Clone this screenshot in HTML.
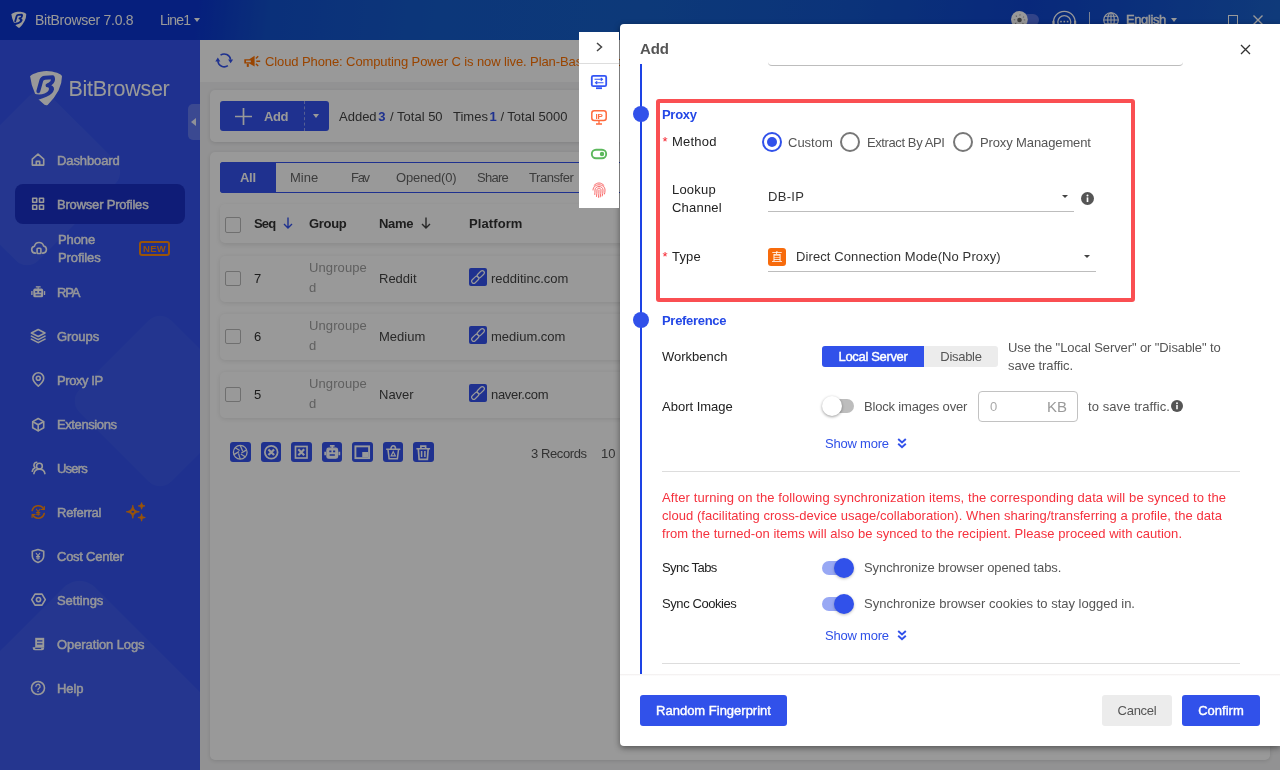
<!DOCTYPE html>
<html lang="en">
<head>
<meta charset="utf-8">
<title>BitBrowser</title>
<style>
*{box-sizing:border-box;margin:0;padding:0}
html,body{width:1280px;height:770px;overflow:hidden}
body{font-family:"Liberation Sans","Noto Sans CJK SC",sans-serif;font-size:13px;color:#333;background:#f4f4f5;position:relative}
.abs{position:absolute}
#titlebar,#sidebar,#main,#dialog,#strip{will-change:transform}
svg{display:block;overflow:visible}
/* title bar */
#titlebar{position:absolute;left:0;top:0;width:1280px;height:40px;background:linear-gradient(97deg,#0a34d0 0%,#0a35d0 15.500%,#1250cb 21%,#155ccb 34%,#1660ca 50%,#1356cb 66%,#0e44ce 80%,#1352cd 90%,#1a62cc 100%);color:#fff}
#titlebar .t{position:absolute;top:0;height:40px;line-height:40px;font-size:14px;white-space:nowrap}
/* sidebar */
#sidebar{position:absolute;left:0;top:40px;width:200px;height:730px;background:#3453ee;overflow:hidden}
.deco{position:absolute;background:rgba(255,255,255,.05);transform:rotate(45deg)}
.nav{position:absolute;left:57px;color:rgba(255,255,255,.95);font-weight:400;-webkit-text-stroke:.45px rgba(255,255,255,.95);font-size:13px;white-space:nowrap;line-height:18px;letter-spacing:-.1px;margin-top:1px}
.nico{position:absolute;left:31px;width:14px;height:14px}
.nico svg{width:14px;height:14px;fill:none;stroke:rgba(255,255,255,.92);stroke-width:1.6;stroke-linecap:round;stroke-linejoin:round}
/* main */
#main{position:absolute;left:200px;top:40px;width:1080px;height:730px;background:#f4f4f5}
.card{position:absolute;background:#fff;border-radius:5px;box-shadow:0 1px 4px rgba(0,0,0,.12)}
.txt{position:absolute;white-space:nowrap;line-height:18px;margin-top:1px}
#overlay{position:absolute;left:0;top:0;width:1280px;height:770px;background:rgba(0,0,0,.4)}
/* dialog */
#dialog{position:absolute;left:620px;top:24px;width:660px;height:722px;background:#fff;border-radius:4px 0 0 4px;box-shadow:0 2px 6px rgba(0,0,0,.45)}
#strip{position:absolute;left:579px;top:32px;width:40px;height:176px;background:#fff}
.pri{color:#3151ea}
.btn{position:absolute;border-radius:3px;text-align:center;white-space:nowrap}
</style>
</head>
<body>
<div id="titlebar">
<div class="abs" style="left:9.400px;top:9.300px"><svg viewBox="0 0 45 45" width="21" height="21"><defs><mask id="mk2"><rect width="45" height="45" fill="#000"/><path d="M5 11.800C5 9.500 14 6 21.500 5.900C29 6 37 9 37 11.200Q37 18.500 33.500 25.500Q29 34 22.600 40Q21 40.600 19.500 39.800L13.300 34.300L10 28.500Q6 20 5 10.800Z" fill="#fff"/><path d="M13.300 26.300L16.300 15.400Q17.100 12.900 20 12.700L27.600 12.200Q28.800 14.600 27 17.200Q25.400 19.400 22.500 20.300" fill="none" stroke="#000" stroke-width="3.900" stroke-linecap="round" stroke-linejoin="round"/><path d="M22 18.800Q29.600 20.400 29 24.600Q28 29 21.500 31.800Q17 33.600 12.500 35L9 28.800Q15 30.400 19.500 28.600Q23.800 26.800 24 23.800Q24 22 21 21.600Z" fill="#000"/></mask></defs><rect width="45" height="45" fill="#fff" mask="url(#mk2)"/></svg></div>
<div class="t" style="left:35px;letter-spacing:-.27px">BitBrowser 7.0.8</div>
<div class="t" style="left:160px;letter-spacing:-.8px">Line1</div>
<div class="abs" style="left:194px;top:18px;width:0;height:0;border-left:3.5px solid transparent;border-right:3.5px solid transparent;border-top:4px solid #fff"></div>
<div class="abs" style="left:1012px;top:14px;width:27px;height:12px;border-radius:6px;background:rgba(125,140,240,.62)"></div>
<svg class="abs" style="left:1010px;top:10px" width="19" height="19" viewBox="0 0 19 19"><circle cx="9.400" cy="9.400" r="8.400" fill="#fff"/><circle cx="9.500" cy="10" r="2.300" fill="#666"/><circle cx="9.500" cy="10" r="5" fill="none" stroke="#999" stroke-width="1.500" stroke-dasharray=".9 3.027" transform="rotate(-6 9.500 10)"/></svg>
<svg class="abs" style="left:1050px;top:8px" width="30" height="30" viewBox="0 0 30 30" fill="none" stroke="#fff" stroke-width="1.250"><circle cx="14.300" cy="14.100" r="6.500"/><path d="M3.670 16A10.800 10.800 0 1 1 24.930 16"/><path d="M3.500 13.500v5M25.100 13.500v5" stroke-width="2.200" stroke-linecap="round"/><rect x="10.200" y="12.800" width="1.600" height="1.600" fill="#fff" stroke="none"/><rect x="13.500" y="12.800" width="1.600" height="1.600" fill="#fff" stroke="none"/><rect x="16.800" y="12.800" width="1.600" height="1.600" fill="#fff" stroke="none"/></svg>
<div class="abs" style="left:1089px;top:12px;width:1px;height:16px;background:rgba(255,255,255,.8)"></div>
<svg class="abs" style="left:1103px;top:12px" width="16" height="16" viewBox="0 0 16 16" fill="none" stroke="#fff" stroke-width="1.1"><circle cx="8" cy="8" r="7.300"/><ellipse cx="8" cy="8" rx="3.300" ry="7.300"/><path d="M.7 8h14.600M1.700 4.300h12.600M1.700 11.700h12.600M8 .7v14.600"/></svg>
<div class="t" style="left:1126px;font-size:13px;letter-spacing:-.4px;-webkit-text-stroke:.4px #fff">English</div>
<div class="abs" style="left:1171px;top:18px;width:0;height:0;border-left:3.5px solid transparent;border-right:3.5px solid transparent;border-top:4px solid #fff"></div>
<div class="abs" style="left:1228px;top:15px;width:10px;height:12px;border:1.3px solid #fff"></div>
<svg class="abs" style="left:1253px;top:15px" width="10" height="10" viewBox="0 0 10 10" stroke="#fff" stroke-width="1.4"><path d="M.5 .5l9 9M9.500 .5l-9 9"/></svg>
</div>
<div id="sidebar">
<div class="deco" style="left:-28px;top:68px;width:123px;height:141px;border-radius:16px"></div>
<div class="deco" style="left:95px;top:296px;width:130px;height:130px;border-radius:16px;background:rgba(255,255,255,.04)"></div>
<div class="deco" style="left:-76.500px;top:595.500px;width:311px;height:311px;border-radius:22px"></div>
<div class="abs" style="left:25px;top:25px"><svg viewBox="0 0 45 45" width="45" height="45"><defs><mask id="mk1"><rect width="45" height="45" fill="#000"/><path d="M5 11.800C5 9.500 14 6 21.500 5.900C29 6 37 9 37 11.200Q37 18.500 33.500 25.500Q29 34 22.600 40Q21 40.600 19.500 39.800L13.300 34.300L10 28.500Q6 20 5 10.800Z" fill="#fff"/><path d="M13.300 26.300L16.300 15.400Q17.100 12.900 20 12.700L27.600 12.200Q28.800 14.600 27 17.200Q25.400 19.400 22.500 20.300" fill="none" stroke="#000" stroke-width="3.900" stroke-linecap="round" stroke-linejoin="round"/><path d="M22 18.800Q29.600 20.400 29 24.600Q28 29 21.500 31.800Q17 33.600 12.500 35L9 28.800Q15 30.400 19.500 28.600Q23.800 26.800 24 23.800Q24 22 21 21.600Z" fill="#000"/></mask></defs><rect width="45" height="45" fill="#fff" mask="url(#mk1)"/></svg></div>
<div class="abs" style="left:68.500px;top:34px;font-size:21.500px;line-height:30px;color:#fff;letter-spacing:-.3px;white-space:nowrap">BitBrowser</div>
<div class="abs" style="left:188px;top:64px;width:12px;height:36px;border-radius:5px 0 0 5px;background:rgba(255,255,255,.23)"></div>
<div class="abs" style="left:191px;top:78px;width:0;height:0;border-top:4px solid transparent;border-bottom:4px solid transparent;border-right:5px solid rgba(255,255,255,.9)"></div>
<div class="abs" style="left:15px;top:144px;width:170px;height:40px;border-radius:8px;background:#1a2fc6"></div>
<svg class="abs" style="left:30px;top:112px" width="16" height="16" viewBox="0 0 16 16" fill="none" stroke="#fff" stroke-width="1.600" stroke-linejoin="round" stroke-linecap="round"><path d="M2.300 13.100V7.100L8 2.200l5.700 4.900v6z"/><path d="M6.300 13.100V9.400h3.400v3.700"/></svg>
<svg class="abs" style="left:30px;top:156px" width="16" height="16" viewBox="0 0 16 16" fill="none" stroke="#fff" stroke-width="1.600" stroke-linejoin="round" stroke-linecap="round"><rect x="2.700" y="2.300" width="4" height="4"/><rect x="9.500" y="2.300" width="4" height="4"/><rect x="2.700" y="9.300" width="4" height="4"/><rect x="9.500" y="9.300" width="4" height="4"/></svg>
<svg class="abs" style="left:30px;top:200px" width="16" height="16" viewBox="0 0 16 16" fill="none" stroke="#fff" stroke-width="1.600" stroke-linejoin="round" stroke-linecap="round"><path d="M5.600 13.100H5.200a3.500 3.500 0 0 1-.7-6.930A4.700 4.700 0 0 1 13.600 6a3.600 3.600 0 0 1-.5 7.100h-.7"/><rect x="7.100" y="8.300" width="3.800" height="5.200" rx=".8"/></svg>
<svg class="abs" style="left:30px;top:244px" width="16" height="16" viewBox="0 0 16 16" fill="#fff"><rect x="3.300" y="4.600" width="9.800" height="8.700" rx="1.600"/><rect x="5.800" y="2.200" width="4.800" height="1.300"/><rect x="7.500" y="3.300" width="1.400" height="1.500"/><rect x="1.200" y="7" width="1.400" height="4" rx=".5"/><rect x="13.800" y="7" width="1.400" height="4" rx=".5"/><rect x="5.100" y="7.100" width="2.200" height="1.500" fill="#3453ee"/><rect x="9.100" y="7.100" width="2.200" height="1.500" fill="#3453ee"/><rect x="5.600" y="10.300" width="5.200" height="1.200" fill="#3453ee"/></svg>
<svg class="abs" style="left:30px;top:288px" width="16" height="16" viewBox="0 0 16 16" fill="none" stroke="#fff" stroke-width="1.600" stroke-linejoin="round" stroke-linecap="round"><path d="M8.200 1.500L15 5 8.200 8.500 1.400 5z"/><path d="M1.400 8.100l6.800 3.500L15 8.100"/><path d="M1.400 11.100l6.800 3.500 6.800-3.500"/></svg>
<svg class="abs" style="left:30px;top:332px" width="16" height="16" viewBox="0 0 16 16" fill="none" stroke="#fff" stroke-width="1.600" stroke-linejoin="round" stroke-linecap="round"><path d="M8.300 14.200s5.400-4.700 5.400-8A5.400 5.400 0 0 0 2.900 6.200c0 3.300 5.400 8 5.400 8z"/><circle cx="8.300" cy="6.300" r="2"/></svg>
<svg class="abs" style="left:30px;top:376px" width="16" height="16" viewBox="0 0 16 16" fill="none" stroke="#fff" stroke-width="1.600" stroke-linejoin="round" stroke-linecap="round"><path d="M8.200 2.500l5.500 3.100v6.200l-5.500 3.100-5.500-3.100V5.600z"/><path d="M2.900 5.800l5.300 3 5.300-3M8.200 8.800v5.900"/></svg>
<svg class="abs" style="left:30px;top:420px" width="16" height="16" viewBox="0 0 16 16" fill="none" stroke="#fff" stroke-width="1.600" stroke-linejoin="round" stroke-linecap="round"><circle cx="9.400" cy="6.200" r="2.900"/><path d="M3.900 13.700c.3-2.900 2.500-4.500 5.500-4.500s5.200 1.600 5.500 4.500"/><path d="M6.800 2.300a2.900 2.900 0 0 0-2 5M2.200 11.300c.3-1.800 1.300-3 2.900-3.600"/></svg>
<svg class="abs" style="left:30px;top:464px" width="16" height="16" viewBox="0 0 16 16" fill="none" stroke="#ff8a10" stroke-width="1.600" stroke-linejoin="round" stroke-linecap="round"><path d="M2.200 6.500A6.200 6.200 0 0 1 13.800 5.300M14.200 9.500A6.200 6.200 0 0 1 2.600 10.700"/><path d="M14.300 2.600v2.900h-2.900M2.100 13.400v-2.900H5" stroke-width="1.200"/><path d="M6.400 5.200l1.800 2.600L10 5.200M8.200 7.800v3.500M6.500 8.600h3.400M6.500 10.200h3.400" stroke-width="1.100"/></svg>
<svg class="abs" style="left:30px;top:508px" width="16" height="16" viewBox="0 0 16 16" fill="none" stroke="#fff" stroke-width="1.600" stroke-linejoin="round" stroke-linecap="round"><path d="M8 1.600l5.700 1.700v4.600c0 3-2.300 5.300-5.700 6.600C4.600 13.200 2.300 10.900 2.300 7.900V3.300z"/><path d="M6.200 5.300L8 7.900l1.800-2.600M8 7.900v3.500M6.400 8.500h3.200M6.400 10h3.200" stroke-width="1.100"/></svg>
<svg class="abs" style="left:30px;top:552px" width="16" height="16" viewBox="0 0 16 16" fill="none" stroke="#fff" stroke-width="1.600" stroke-linejoin="round" stroke-linecap="round"><path d="M5 2.100h7l3.300 5.500L12 13.100H5L1.700 7.600z"/><circle cx="8.500" cy="7.600" r="2.100"/></svg>
<svg class="abs" style="left:30px;top:596px" width="16" height="16" viewBox="0 0 16 16" fill="#fff"><path d="M5.200 1.800h9v9.400h-9z"/><path d="M2.700 11.200h11.500v.8a2.200 2.200 0 0 1-2.200 2.200H4.900a2.200 2.200 0 0 1-2.200-2.200z"/><rect x="7" y="4.300" width="5.400" height="1.200" fill="#3453ee"/><rect x="7" y="7.300" width="5.400" height="1.200" fill="#3453ee"/><rect x="5.200" y="11.900" width="6" height="1" fill="#3453ee"/></svg>
<svg class="abs" style="left:30px;top:640px" width="16" height="16" viewBox="0 0 16 16" fill="none" stroke="#fff" stroke-width="1.600" stroke-linejoin="round" stroke-linecap="round"><circle cx="8" cy="8" r="6.500"/><path d="M5.900 6.300a2.100 2.100 0 1 1 3.100 1.900c-.7.400-1 .8-1 1.500" stroke-width="1.300"/><circle cx="8" cy="11.500" r=".8" fill="#fff" stroke="none"/></svg>
<div class="nav" style="top:111px">Dashboard</div>
<div class="nav" style="top:155px;letter-spacing:-.2px">Browser Profiles</div>
<div class="nav" style="left:58px;top:190px">Phone<br>Profiles</div>
<div class="nav" style="top:243px;letter-spacing:-1.2px">RPA</div>
<div class="nav" style="top:287px">Groups</div>
<div class="nav" style="top:331px;letter-spacing:-0.42px">Proxy IP</div>
<div class="nav" style="top:375px;letter-spacing:-0.4px">Extensions</div>
<div class="nav" style="top:419px;letter-spacing:-0.8px">Users</div>
<div class="nav" style="top:463px;letter-spacing:-0.25px">Referral</div>
<div class="nav" style="top:507px;letter-spacing:-0.25px">Cost Center</div>
<div class="nav" style="top:551px">Settings</div>
<div class="nav" style="top:595px">Operation Logs</div>
<div class="nav" style="top:639px">Help</div>
<div class="abs" style="left:139px;top:200.500px;width:31px;height:15.500px;border:2px solid #ff8a10;border-radius:3px;color:#ff8a10;font-size:9.500px;font-weight:700;line-height:11.500px;text-align:center;letter-spacing:.2px">NEW</div>
<svg class="abs" style="left:126px;top:462px" width="20" height="20" viewBox="0 0 20 20" fill="#ff8a10" stroke="#ff8a10" stroke-width=".9" stroke-linejoin="round"><path d="M6.800 3.300C7.500 7.600 8.800 8.900 13.300 9.800 8.800 10.700 7.500 12 6.800 16.300 6.100 12 4.800 10.700 .3 9.800 4.800 8.900 6.100 7.600 6.800 3.300z"/><path d="M15.600 .6c.4 2.300 1 2.900 3.300 3.300-2.300.4-2.900 1-3.300 3.300-.4-2.300-1-2.900-3.300-3.300 2.300-.4 2.900-1 3.300-3.300z"/><path d="M15.600 11.800c.4 2.600 1.100 3.300 3.700 3.700-2.600.4-3.300 1.100-3.700 3.700-.4-2.600-1.100-3.300-3.700-3.700 2.600-.4 3.300-1.100 3.700-3.700z"/><ellipse cx="6.800" cy="9.800" rx="1.400" ry="1" fill="#3453ee" stroke="none"/></svg>
</div>
<div id="main">
<div class="abs" style="left:0;top:0;width:1080px;height:42px;background:#fff"></div>
<svg class="abs" style="left:10px;top:6px" width="30" height="30" viewBox="0 0 30 30" fill="none" stroke="#3453ee" stroke-width="1.550"><path d="M10.530 9.160A6.400 6.400 0 0 1 20.580 13.600"/><path d="M17.870 19.640A6.400 6.400 0 0 1 7.820 15.200"/><path d="M18.100 13.400h5l-2.500 3.900z" fill="#3453ee" stroke="none"/><path d="M5.300 15.400h5l-2.500-3.900z" fill="#3453ee" stroke="none"/></svg>
<svg class="abs" style="left:44px;top:15px" width="17" height="13" viewBox="0 0 17 13" fill="#ff7200" stroke="none"><path d="M.3 4.300h5L10.600 .8v10.800L5.300 8.600H.3zM2 5.600v1.700h4.800V5.600z" fill-rule="evenodd"/><path d="M2.800 8.600h2v3.300h-2z"/><path d="M11.400 3.100l2.300-2.300 1 1-2.300 2.300zM12.300 5.500h3.900v1.500h-3.900zM12.400 8.300l2.300 2.300-1 1-2.300-2.300z"/></svg>
<div class="txt" style="left:65px;top:12px;color:#ff7200;letter-spacing:-.1px">Cloud Phone: Computing Power C is now live. Plan-Based Pricing, Flexible Billing, More Cost-Effective</div>
<div class="card" style="left:10px;top:50px;width:1060px;height:52px"></div>
<div class="abs" style="left:20px;top:61px;width:109px;height:30px;border-radius:3px;background:#3453ee"></div>
<div class="abs" style="left:104px;top:61px;width:0;height:30px;border-left:1px dashed rgba(255,255,255,.45)"></div>
<svg class="abs" style="left:35px;top:68px" width="17" height="17" viewBox="0 0 17 17" stroke="#fff" stroke-width="1.700"><path d="M8.500 0v17M0 8.500h17"/></svg>
<div class="txt" style="left:64px;top:67px;color:#fff;font-weight:700;letter-spacing:-.4px">Add</div>
<div class="abs" style="left:113px;top:74px;width:0;height:0;border-left:3.500px solid transparent;border-right:3.500px solid transparent;border-top:4px solid #fff"></div>
<div class="txt" style="left:139px;top:67px;color:#444">Added <b style="color:#3453ee;margin-left:-2px">3</b> <span style="margin-left:1px">/</span> Total 50</div>
<div class="txt" style="left:253px;top:67px;color:#444">Times <b style="color:#3453ee;margin-left:-2px">1</b> / Total 5000</div>
<div class="card" style="left:10px;top:112px;width:1060px;height:608px"></div>
<div class="abs" style="left:20px;top:122px;width:1040px;height:31px;border:1px solid #3453ee;border-radius:3px"></div>
<div class="abs" style="left:20px;top:122px;width:56px;height:31px;border-radius:3px 0 0 3px;background:#3453ee"></div>
<div class="txt" style="left:40px;top:128px;color:#fff;font-weight:700;letter-spacing:-.3px">All</div>
<div class="txt" style="left:90px;top:128px;color:#666">Mine</div>
<div class="txt" style="left:151px;top:128px;color:#666;letter-spacing:-1.300px">Fav</div>
<div class="txt" style="left:196px;top:128px;color:#666;letter-spacing:-.2px">Opened(0)</div>
<div class="txt" style="left:277px;top:128px;color:#666;letter-spacing:-.75px">Share</div>
<div class="txt" style="left:329px;top:128px;color:#666;letter-spacing:-.45px">Transfer</div>
<div class="abs" style="left:20px;top:164px;width:1040px;height:39px;border-radius:5px;background:#fff;box-shadow:0 2px 5px rgba(0,0,0,.10)"></div>
<div class="abs" style="left:25px;top:177px;width:16px;height:16px;border:1px solid #b9b9b9;border-radius:2px;background:#fff"></div>
<div class="txt" style="left:54px;top:174px;color:#333;font-weight:700;letter-spacing:-.8px">Seq</div>
<div class="txt" style="left:109px;top:174px;color:#333;font-weight:700;letter-spacing:-.3px">Group</div>
<div class="txt" style="left:179px;top:174px;color:#333;font-weight:700;letter-spacing:-.3px">Name</div>
<div class="txt" style="left:269px;top:174px;color:#333;font-weight:700;letter-spacing:.1px">Platform</div>
<svg class="abs" style="left:83px;top:177px" width="10" height="12" viewBox="0 0 10 12" fill="none" stroke="#3453ee" stroke-width="1.400"><path d="M5 .5v10.500M1 7l4 4 4-4"/></svg>
<svg class="abs" style="left:221px;top:177px" width="10" height="12" viewBox="0 0 10 12" fill="none" stroke="#444" stroke-width="1.400"><path d="M5 .5v10.500M1 7l4 4 4-4"/></svg>
<div class="abs" style="left:20px;top:215.5px;width:1040px;height:46.500px;border-radius:5px;background:#fff;box-shadow:0 1px 5px rgba(0,0,0,.10)"></div>
<div class="abs" style="left:25px;top:231px;width:16px;height:15px;border:1px solid #b9b9b9;border-radius:2px;background:#fff"></div>
<div class="txt" style="left:54px;top:229px;color:#333">7</div>
<div class="txt" style="left:109px;top:217px;color:#a0a0a0;line-height:20px;letter-spacing:.1px">Ungroupe<br>d</div>
<div class="txt" style="left:179px;top:229px;color:#444">Reddit</div>
<div class="abs" style="left:269px;top:228px;width:18px;height:18px;border-radius:2px;background:#3453ee"></div>
<svg class="abs" style="left:269px;top:228px" width="18" height="18" viewBox="0 0 18 18" fill="none" stroke="#fff" stroke-width="1.150"><g transform="rotate(-45 9 9)"><rect x=".9" y="6.900" width="8.400" height="4.200" rx="2.100"/><rect x="8.700" y="6.900" width="8.400" height="4.200" rx="2.100"/></g></svg>
<div class="txt" style="left:291px;top:229px;color:#444">redditinc.com</div>
<div class="abs" style="left:20px;top:273.5px;width:1040px;height:46.500px;border-radius:5px;background:#fff;box-shadow:0 1px 5px rgba(0,0,0,.10)"></div>
<div class="abs" style="left:25px;top:289px;width:16px;height:15px;border:1px solid #b9b9b9;border-radius:2px;background:#fff"></div>
<div class="txt" style="left:54px;top:287px;color:#333">6</div>
<div class="txt" style="left:109px;top:275px;color:#a0a0a0;line-height:20px;letter-spacing:.1px">Ungroupe<br>d</div>
<div class="txt" style="left:179px;top:287px;color:#444">Medium</div>
<div class="abs" style="left:269px;top:286px;width:18px;height:18px;border-radius:2px;background:#3453ee"></div>
<svg class="abs" style="left:269px;top:286px" width="18" height="18" viewBox="0 0 18 18" fill="none" stroke="#fff" stroke-width="1.150"><g transform="rotate(-45 9 9)"><rect x=".9" y="6.900" width="8.400" height="4.200" rx="2.100"/><rect x="8.700" y="6.900" width="8.400" height="4.200" rx="2.100"/></g></svg>
<div class="txt" style="left:291px;top:287px;color:#444">medium.com</div>
<div class="abs" style="left:20px;top:331.5px;width:1040px;height:46.500px;border-radius:5px;background:#fff;box-shadow:0 1px 5px rgba(0,0,0,.10)"></div>
<div class="abs" style="left:25px;top:347px;width:16px;height:15px;border:1px solid #b9b9b9;border-radius:2px;background:#fff"></div>
<div class="txt" style="left:54px;top:345px;color:#333">5</div>
<div class="txt" style="left:109px;top:333px;color:#a0a0a0;line-height:20px;letter-spacing:.1px">Ungroupe<br>d</div>
<div class="txt" style="left:179px;top:345px;color:#444">Naver</div>
<div class="abs" style="left:269px;top:344px;width:18px;height:18px;border-radius:2px;background:#3453ee"></div>
<svg class="abs" style="left:269px;top:344px" width="18" height="18" viewBox="0 0 18 18" fill="none" stroke="#fff" stroke-width="1.150"><g transform="rotate(-45 9 9)"><rect x=".9" y="6.900" width="8.400" height="4.200" rx="2.100"/><rect x="8.700" y="6.900" width="8.400" height="4.200" rx="2.100"/></g></svg>
<div class="txt" style="left:291px;top:345px;color:#444;letter-spacing:-.3px">naver.com</div>
<div class="abs" style="left:30px;top:402px;width:20.500px;height:20px;border-radius:3px;background:#3453ee"></div>
<svg class="abs" style="left:32.0px;top:403.500px" width="16.500" height="16.500" viewBox="0 0 14 14" fill="none" stroke="#fff" stroke-width="1.100"><circle cx="7" cy="7" r="5.800"/><path d="M7 1.200L9 6M12.500 5L8 7.500M11.500 11L7.500 8.500M7 12.800L5.500 8M1.500 9L6 6.500M2.500 3L6.500 5.500"/></svg>
<div class="abs" style="left:60.5px;top:402px;width:20.500px;height:20px;border-radius:3px;background:#3453ee"></div>
<svg class="abs" style="left:62.5px;top:403.500px" width="16.500" height="16.500" viewBox="0 0 14 14" fill="none" stroke="#fff" stroke-width="1.100"><circle cx="7" cy="7" r="5.400" stroke-width="1.500"/><path d="M4.600 4.600l4.800 4.800M9.400 4.600L4.600 9.400" stroke-width="1.900"/></svg>
<div class="abs" style="left:91px;top:402px;width:20.500px;height:20px;border-radius:3px;background:#3453ee"></div>
<svg class="abs" style="left:93.0px;top:403.500px" width="16.500" height="16.500" viewBox="0 0 14 14" fill="none" stroke="#fff" stroke-width="1.100"><rect x="2.100" y="2.100" width="9.800" height="9.800" stroke-width="1.400"/><path d="M4.500 4.500l5 5M9.500 4.500l-5 5" stroke-width="1.900"/></svg>
<div class="abs" style="left:121.5px;top:402px;width:20.500px;height:20px;border-radius:3px;background:#3453ee"></div>
<svg class="abs" style="left:123.5px;top:403.500px" width="16.500" height="16.500" viewBox="0 0 14 14" fill="none" stroke="#fff" stroke-width="1.100"><rect x="2.500" y="3.500" width="9" height="8.500" rx="1.500" fill="#fff"/><path d="M7 3.500V1.500M5 1.500h4M1 6.500v3M13 6.500v3" stroke-width="1.500"/><path d="M4.500 6.300h1.800M7.700 6.300h1.800M4.800 9.300h4.400" stroke="#3453ee" stroke-width="1.400"/></svg>
<div class="abs" style="left:152px;top:402px;width:20.500px;height:20px;border-radius:3px;background:#3453ee"></div>
<svg class="abs" style="left:154.0px;top:403.500px" width="16.500" height="16.500" viewBox="0 0 14 14" fill="none" stroke="#fff" stroke-width="1.100"><rect x="1.200" y="2" width="11.600" height="10" stroke-width="1.600"/><rect x="7" y="6.800" width="5" height="4.400" fill="#fff" stroke="none"/></svg>
<div class="abs" style="left:182.5px;top:402px;width:20.500px;height:20px;border-radius:3px;background:#3453ee"></div>
<svg class="abs" style="left:184.5px;top:403.500px" width="16.500" height="16.500" viewBox="0 0 14 14" fill="none" stroke="#fff" stroke-width="1.100"><path d="M2.500 4.500h9l-1 8h-7zM1 4.500h12M5 4.500C5 2.500 6 1.500 7 1.500s2 1 2 3" stroke-width="1.300"/><path d="M7 6.500l1.800 3.500H5.200z" stroke-width="1"/></svg>
<div class="abs" style="left:213px;top:402px;width:20.500px;height:20px;border-radius:3px;background:#3453ee"></div>
<svg class="abs" style="left:215.0px;top:403.500px" width="16.500" height="16.500" viewBox="0 0 14 14" fill="none" stroke="#fff" stroke-width="1.100"><path d="M2.800 4h8.400l-.7 9h-7zM1.200 4h11.600M5 4V1.800h4V4" stroke-width="1.400"/><path d="M5.600 6v5M8.400 6v5" stroke-width="1.300"/></svg>
<div class="txt" style="left:331px;top:404px;color:#555;letter-spacing:-.4px">3 Records</div>
<div class="txt" style="left:401px;top:404px;color:#555">10 Records/Page</div>
</div>
<div id="overlay"></div>
<div id="dialog">
<div class="txt" style="left:20px;top:15px;font-size:15px;font-weight:700;color:#555;letter-spacing:-.1px">Add</div>
<svg class="abs" style="left:620px;top:20px" width="11" height="11" viewBox="0 0 11 11" stroke="#333" stroke-width="1.300"><path d="M1 1l9 9M10 1l-9 9"/></svg>
<div class="abs" style="left:148px;top:38px;width:415px;height:4px;border-bottom:1px solid #bdbdbd;border-radius:0 0 4px 4px"></div>
<div class="abs" style="left:20px;top:40px;width:2px;height:610px;background:#1d43e5"></div>
<div class="abs" style="left:13px;top:82px;width:16px;height:16px;border-radius:50%;background:#3151ea"></div>
<div class="abs" style="left:13px;top:288px;width:16px;height:16px;border-radius:50%;background:#3151ea"></div>
<div class="abs" style="left:36px;top:75px;width:479px;height:203px;border:4px solid #fa4f52;border-radius:3px"></div>
<div class="txt" style="left:42px;top:81px;font-weight:700;color:#2347e6;letter-spacing:-.3px">Proxy</div>
<div class="txt" style="left:42.500px;top:108px;color:#f5222d;font-size:13px">*</div>
<div class="txt" style="left:52px;top:108px;color:#222;letter-spacing:.2px">Method</div>
<div class="abs" style="left:142px;top:108px;width:20px;height:20px;border-radius:50%;border:2px solid #3151ea"></div>
<div class="abs" style="left:147px;top:113px;width:10px;height:10px;border-radius:50%;background:#3151ea"></div>
<div class="txt" style="left:168px;top:109px;color:#555">Custom</div>
<div class="abs" style="left:220px;top:108px;width:20px;height:20px;border-radius:50%;border:2px solid #777"></div>
<div class="txt" style="left:247px;top:109px;color:#555;letter-spacing:-.4px">Extract By API</div>
<div class="abs" style="left:333px;top:108px;width:20px;height:20px;border-radius:50%;border:2px solid #777"></div>
<div class="txt" style="left:360px;top:109px;color:#555;letter-spacing:-.12px">Proxy Management</div>
<div class="txt" style="left:52px;top:156px;color:#222;letter-spacing:.2px">Lookup<br>Channel</div>
<div class="txt" style="left:148px;top:163px;color:#333;letter-spacing:.3px">DB-IP</div>
<div class="abs" style="left:148px;top:187px;width:306px;height:1px;background:#bdbdbd"></div>
<div class="abs" style="left:442px;top:171px;width:0;height:0;border-left:3.500px solid transparent;border-right:3.500px solid transparent;border-top:3.500px solid #444"></div>
<svg class="abs" style="left:461px;top:167.5px" width="13" height="13" viewBox="0 0 14 14"><circle cx="7" cy="7" r="7" fill="#555"/><rect x="6.100" y="5.800" width="1.800" height="5" fill="#fff"/><circle cx="7" cy="3.800" r="1.100" fill="#fff"/></svg>
<div class="txt" style="left:42.500px;top:223px;color:#f5222d;font-size:13px">*</div>
<div class="txt" style="left:52px;top:223px;color:#222;letter-spacing:.2px">Type</div>
<div class="abs" style="left:148px;top:224px;width:18px;height:18px;border-radius:3px;background:#f76b0c;color:#fff;font-size:11px;line-height:17px;text-align:center;font-family:'Noto Sans CJK SC',sans-serif">直</div>
<div class="txt" style="left:176px;top:223px;color:#333;letter-spacing:.1px">Direct Connection Mode(No Proxy)</div>
<div class="abs" style="left:148px;top:247px;width:328px;height:1px;background:#bdbdbd"></div>
<div class="abs" style="left:464px;top:231px;width:0;height:0;border-left:3.500px solid transparent;border-right:3.500px solid transparent;border-top:3.500px solid #444"></div>
<div class="txt" style="left:42px;top:287px;font-weight:700;color:#2347e6;letter-spacing:-.3px">Preference</div>
<div class="txt" style="left:42px;top:323px;color:#222">Workbench</div>
<div class="abs" style="left:202px;top:322px;width:176px;height:21px;border-radius:3px;background:#ececec"></div>
<div class="abs" style="left:202px;top:322px;width:102px;height:21px;border-radius:3px 0 0 3px;background:#3151ea"></div>
<div class="txt" style="left:202px;top:323px;width:102px;text-align:center;color:#fff;-webkit-text-stroke:.4px #fff;letter-spacing:-.35px">Local Server</div>
<div class="txt" style="left:304px;top:323px;width:74px;text-align:center;color:#555;letter-spacing:-.3px">Disable</div>
<div class="txt" style="left:388px;top:314px;color:#555;letter-spacing:-.1px">Use the "Local Server" or "Disable" to<br>save traffic.</div>
<div class="txt" style="left:42px;top:373px;color:#222">Abort Image</div>
<div class="abs" style="left:203px;top:375px;width:31px;height:14px;border-radius:7px;background:#bdbdbd"></div>
<div class="abs" style="left:202px;top:372px;width:20px;height:20px;border-radius:50%;background:#fff;box-shadow:0 1px 3px rgba(0,0,0,.4)"></div>
<div class="txt" style="left:244px;top:373px;color:#555;letter-spacing:-.18px">Block images over</div>
<div class="abs" style="left:358px;top:366.500px;width:100px;height:31px;border:1px solid #c2c2c2;border-radius:4px"></div>
<div class="txt" style="left:370px;top:373px;color:#aaa">0</div>
<div class="txt" style="left:427px;top:373px;color:#9a9a9a;font-size:15px">KB</div>
<div class="txt" style="left:468px;top:373px;color:#555;letter-spacing:.08px">to save traffic.</div>
<svg class="abs" style="left:551px;top:376px" width="12" height="12" viewBox="0 0 14 14"><circle cx="7" cy="7" r="7" fill="#555"/><rect x="6.100" y="5.800" width="1.800" height="5" fill="#fff"/><circle cx="7" cy="3.800" r="1.100" fill="#fff"/></svg>
<div class="txt" style="left:205px;top:410px;color:#2f50e8;letter-spacing:-.22px">Show more</div>
<svg class="abs" style="left:277px;top:414px" width="10" height="11" viewBox="0 0 10 11" fill="none" stroke="#3151ea" stroke-width="1.900"><path d="M1.200 1L5 4.500 8.800 1M1.200 5.800L5 9.300l3.800-3.500"/></svg>
<div class="abs" style="left:42px;top:447px;width:578px;height:1px;background:#ddd"></div>
<div class="txt" style="left:42px;top:464px;color:#f5313d"><span style="letter-spacing:.1px">After turning on the following synchronization items, the corresponding data will be synced to the</span><br><span style="letter-spacing:.05px">cloud (facilitating cross-device usage/collaboration). When sharing/transferring a profile, the data</span><br><span style="letter-spacing:.045px">from the turned-on items will also be synced to the recipient. Please proceed with caution.</span></div>
<div class="txt" style="left:42px;top:534px;color:#222;letter-spacing:-.55px">Sync Tabs</div>
<div class="abs" style="left:202px;top:537px;width:31px;height:14px;border-radius:7px;background:#98a8f4"></div>
<div class="abs" style="left:214px;top:534px;width:20px;height:20px;border-radius:50%;background:#3151ea;box-shadow:0 1px 3px rgba(0,0,0,.25)"></div>
<div class="txt" style="left:244px;top:534px;color:#555;letter-spacing:-.09px">Synchronize browser opened tabs.</div>
<div class="txt" style="left:42px;top:570px;color:#222;letter-spacing:-.42px">Sync Cookies</div>
<div class="abs" style="left:202px;top:573px;width:31px;height:14px;border-radius:7px;background:#98a8f4"></div>
<div class="abs" style="left:214px;top:570px;width:20px;height:20px;border-radius:50%;background:#3151ea;box-shadow:0 1px 3px rgba(0,0,0,.25)"></div>
<div class="txt" style="left:244px;top:570px;color:#555">Synchronize browser cookies to stay logged in.</div>
<div class="txt" style="left:205px;top:602px;color:#2f50e8;letter-spacing:-.22px">Show more</div>
<svg class="abs" style="left:277px;top:606px" width="10" height="11" viewBox="0 0 10 11" fill="none" stroke="#3151ea" stroke-width="1.900"><path d="M1.200 1L5 4.500 8.800 1M1.200 5.800L5 9.300l3.800-3.500"/></svg>
<div class="abs" style="left:42px;top:639px;width:578px;height:1px;background:#ddd"></div>
<div class="abs" style="left:0;top:650px;width:660px;height:2px;background:linear-gradient(#f1eeee,#fff)"></div>
<div class="btn" style="left:20px;top:671px;width:147px;height:31px;line-height:31px;background:#3151ea;color:#fff;-webkit-text-stroke:.4px #fff;letter-spacing:0">Random Fingerprint</div>
<div class="btn" style="left:482px;top:671px;width:70px;height:31px;line-height:31px;background:#ececec;color:#555;letter-spacing:-.25px">Cancel</div>
<div class="btn" style="left:562px;top:671px;width:78px;height:31px;line-height:31px;background:#3151ea;color:#fff;-webkit-text-stroke:.4px #fff;letter-spacing:0">Confirm</div>
</div>
<div id="strip">
<svg class="abs" style="left:17px;top:10px" width="7" height="10" viewBox="0 0 7 10" fill="none" stroke="#444" stroke-width="1.500"><path d="M1 1l4.500 4L1 9"/></svg>
<div class="abs" style="left:0;top:31px;width:40px;height:1px;background:#ddd"></div>
<svg class="abs" style="left:12px;top:43px" width="16" height="14" viewBox="0 0 16 14" fill="none" stroke="#3355f5" stroke-width="1.800"><rect x=".8" y=".8" width="14.400" height="10.400" rx="1.500"/><path d="M5 13.200h6" stroke-width="1.800"/><path d="M3.500 4.300h8M9.800 2.800l1.700 1.500-1.700 1.500M12.500 7.700h-8M6.200 6.200L4.500 7.700l1.700 1.500" stroke-width="1.100"/></svg>
<svg class="abs" style="left:12px;top:78px" width="16" height="15" viewBox="0 0 16 15" fill="none" stroke="#ff6a3d" stroke-width="1.500"><rect x=".8" y=".8" width="14.400" height="9.800" rx="2.500"/><path d="M8 10.600v3M5 14h6" stroke-width="1.300"/></svg>
<div class="abs" style="left:12px;top:80.500px;width:16px;text-align:center;font-size:8px;line-height:8px;font-weight:700;color:#ff6a3d;letter-spacing:-.2px">IP</div>
<svg class="abs" style="left:12px;top:117px" width="16" height="10" viewBox="0 0 16 10" fill="none" stroke="#5cb85c" stroke-width="1.900"><rect x=".8" y=".8" width="14.400" height="8.400" rx="4.200"/><circle cx="11" cy="5" r="2.200" fill="#5cb85c" stroke="none"/></svg>
<svg class="abs" style="left:13px;top:150px" width="14" height="16" viewBox="0 0 14 16" fill="none" stroke="#f75a5a" stroke-width=".9" stroke-linecap="round"><path d="M2 3.500C3.500 1.800 5.200 1 7 1s3.500.8 5 2.500"/><path d="M1 8c0-3 2.700-5.200 6-5.200S13 5 13 8c0 1.500-.2 3-.5 4"/><path d="M2.800 12.500C2.900 11 3 9.500 3 8c0-2 1.800-3.500 4-3.500S11 6 11 8c0 2.200-.3 4.500-.8 6"/><path d="M4.500 14.500C4.800 12.500 5 10 5 8c0-1 .9-1.800 2-1.800S9 7 9 8c0 2.500-.3 5-.8 7"/><path d="M6.500 15.300C6.800 13 7 10.500 7 8"/></svg>
</div>
</body>
</html>
